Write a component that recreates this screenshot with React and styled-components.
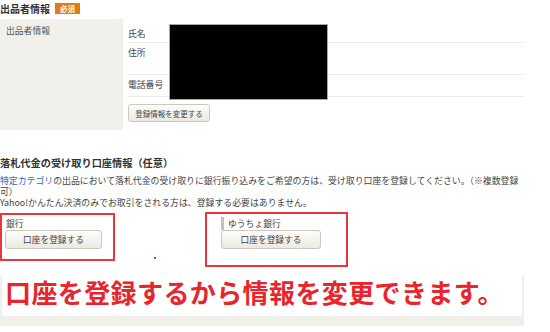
import React from "react";
import styled, { createGlobalStyle } from "styled-components";

const Global = createGlobalStyle`
  html, body { margin: 0; padding: 0; background: #fff; }
  body {
    font-family: "Noto Sans CJK JP", "Noto Sans", sans-serif;
    color: #333;
    font-size: 8.8px;
    line-height: 13px;
  }
`;

const Page = styled.div`
  width: 524px;
`;

const Header = styled.div`
  display: flex;
  align-items: center;
  gap: 5px;
  height: 17px;
  margin-bottom: 2px;
`;

const Title = styled.h2`
  margin: 0;
  font-size: ${(p) => p.$size || 10}px;
  line-height: 13px;
  font-weight: 700;
  color: #333;
`;

const Badge = styled.span`
  display: inline-flex;
  align-items: center;
  justify-content: center;
  width: 25px;
  height: 11px;
  background: #e17a10;
  color: #fff;
  font-size: 7.5px;
  line-height: 11px;
  font-weight: 700;
`;

const InfoBox = styled.div`
  display: flex;
  height: 111px;
`;

const SideLabel = styled.div`
  width: 111px;
  background: #f1f0ea;
  padding: 5px 6px;
  color: #555;
`;

const InfoBody = styled.div`
  position: relative;
  flex: 1;
  padding: 5px 0 0 5px;
`;

const Row = styled.div`
  display: flex;
  height: ${(p) => p.$h}px;
  padding-top: 3px;
  box-sizing: border-box;
  border-bottom: 1px solid #ececec;
  color: #444;
`;

const Redact = styled.div`
  position: absolute;
  left: 46px;
  top: 5px;
  width: 157px;
  height: 74px;
  background: #000;
  border: 1px solid #a8a8a8;
`;

const Button = styled.button`
  display: inline-flex;
  align-items: center;
  justify-content: center;
  box-sizing: border-box;
  width: ${(p) => p.$w}px;
  height: ${(p) => p.$h}px;
  margin-top: ${(p) => p.$mt || 0}px;
  padding: 0;
  font-family: inherit;
  font-size: ${(p) => p.$fs}px;
  color: #444;
  background: linear-gradient(#fdfdfb, #ebe9e1);
  border: 1px solid #cbc8bd;
  border-radius: 3px;
`;

const Section = styled.div`
  margin-top: 26px;
`;

const Para = styled.p`
  margin: 6px 0 0;
  line-height: 11px;
  color: #444;
  white-space: nowrap;
  font-size: 8.9px;
`;

const Link = styled.a`
  color: #3b64cc;
  text-decoration: none;
`;

const Accounts = styled.div`
  position: relative;
  display: flex;
  padding: 9px 0 0 5px;
`;

const AccountCol = styled.div`
  width: ${(p) => p.$w}px;
  display: flex;
  flex-direction: column;
  align-items: flex-start;
`;

const AccountLabel = styled.div`
  line-height: 13px;
  color: #444;
  padding-left: ${(p) => (p.$bar ? 4 : 1)}px;
  border-left: ${(p) => (p.$bar ? "3px solid #c4c2b8" : "none")};
  height: 13px;
  display: flex;
  align-items: center;
`;

const RedFrame = styled.div`
  position: absolute;
  box-sizing: border-box;
  border: 2px solid #e8363c;
  left: ${(p) => p.$x}px;
  top: ${(p) => p.$y}px;
  width: ${(p) => p.$w}px;
  height: ${(p) => p.$h}px;
`;

const Dot = styled.div`
  position: absolute;
  left: 154px;
  top: 49px;
  width: 2px;
  height: 2px;
  background: #e8363c;
`;

const NoteArea = styled.div`
  margin-top: 27px;
  background: #f0efe9;
  padding: 0 2px 10px;
`;

const Note = styled.div`
  height: 40px;
  background: #fff;
  padding-left: 3px;
  color: #e8242c;
  font-size: 26px;
  line-height: 31px;
  font-weight: 700;
  letter-spacing: 0.4px;
  white-space: nowrap;
`;

export default function App() {
  return (
    <Page>
      <Global />
      <Header>
        <Title>出品者情報</Title>
        <Badge>必須</Badge>
      </Header>
      <InfoBox>
        <SideLabel>出品者情報</SideLabel>
        <InfoBody>
          <Row $h={19}>氏名</Row>
          <Row $h={32}>住所</Row>
          <Row $h={22}>電話番号</Row>
          <Button $w={82} $h={18} $mt={7} $fs={7.5}>登録情報を変更する</Button>
          <Redact />
        </InfoBody>
      </InfoBox>
      <Section>
        <Title $size={10.2}>落札代金の受け取り口座情報（任意）</Title>
        <Para>
          <Link href="#">特定カテゴリ</Link>
          の出品において落札代金の受け取りに銀行振り込みをご希望の方は、受け取り口座を登録してください。（※複数登録
          <br />
          可）
          <br />
          Yahoo!かんたん決済のみでお取引をされる方は、登録する必要はありません。
        </Para>
      </Section>
      <Accounts>
        <AccountCol $w={216}>
          <AccountLabel>銀行</AccountLabel>
          <Button $w={97} $h={19} $fs={8.7}>口座を登録する</Button>
        </AccountCol>
        <AccountCol $w={110}>
          <AccountLabel $bar>ゆうちょ銀行</AccountLabel>
          <Button $w={100} $h={19} $fs={8.7}>口座を登録する</Button>
        </AccountCol>
        <RedFrame $x={0} $y={5} $w={115} $h={48} />
        <RedFrame $x={205} $y={4} $w={143} $h={55} />
        <Dot />
      </Accounts>
      <NoteArea>
        <Note>口座を登録するから情報を変更できます。</Note>
      </NoteArea>
    </Page>
  );
}
